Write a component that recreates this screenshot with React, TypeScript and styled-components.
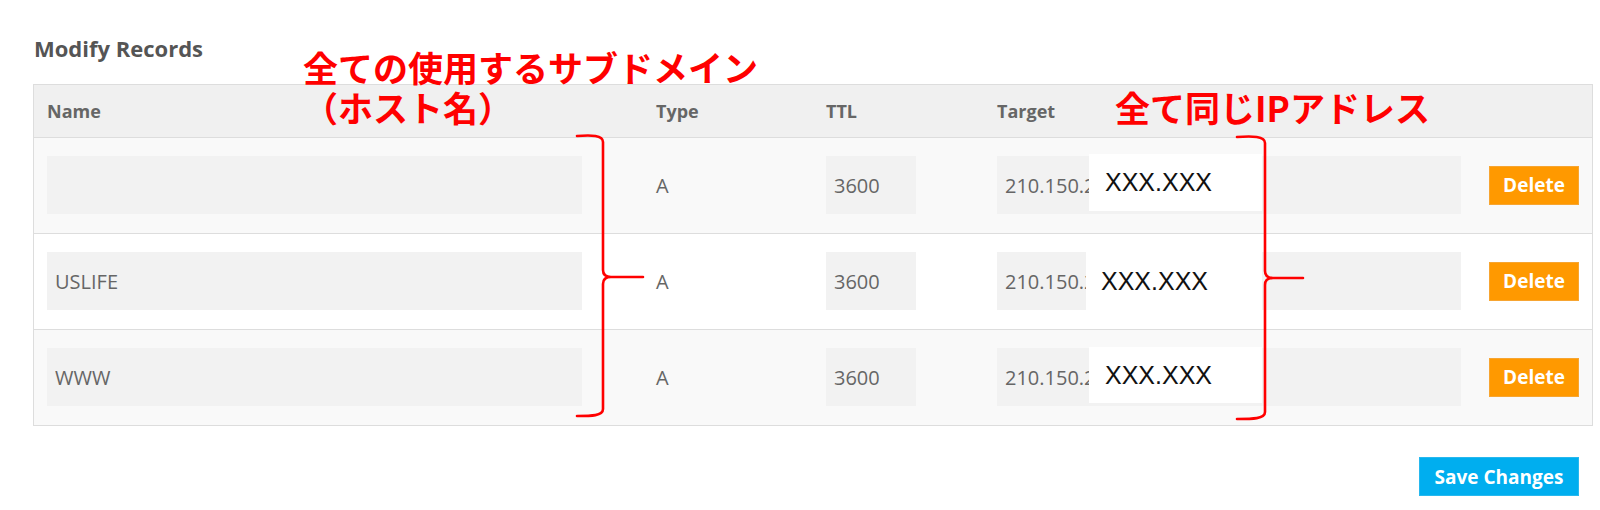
import React from "react";
import styled, { createGlobalStyle } from "styled-components";

const GlobalStyle = createGlobalStyle`
  html, body { margin: 0; padding: 0; background: #ffffff; }
  body { font-family: "Open Sans", "Liberation Sans", sans-serif; }
  * { box-sizing: border-box; }
`;

const Page = styled.div`
  position: relative;
  width: 1600px;
  height: 510px;
  padding: 33px 7px 0 33px;
  overflow: hidden;
`;

const Heading = styled.h2`
  margin: 0 0 21px 1px;
  font-size: 22px;
  line-height: 30px;
  font-weight: 700;
  color: #555555;
`;

const Table = styled.div`
  width: 1560px;
  border: 1px solid #dddddd;
`;

const COLS = "609px 170px 171px 492px 116px";

const HeaderRow = styled.div`
  display: grid;
  grid-template-columns: ${COLS};
  height: 53px;
  background: #f0f0f0;
  border-bottom: 1px solid #dddddd;
`;

const HeaderCell = styled.div`
  display: flex;
  align-items: center;
  padding: 0 13px;
  font-size: 18px;
  font-weight: 700;
  color: #666666;
`;

const Row = styled.div<{ $striped: boolean; $last: boolean }>`
  display: grid;
  grid-template-columns: ${COLS};
  padding: 18px 0 19px;
  background: ${(p) => (p.$striped ? "#f9f9f9" : "#ffffff")};
  border-bottom: ${(p) => (p.$last ? "none" : "1px solid #dddddd")};
`;

const Cell = styled.div`
  position: relative;
  display: flex;
  align-items: center;
  padding: 0 13px;
  font-size: 20px;
  color: #666666;
`;

const Field = styled.input<{ $w: number }>`
  width: ${(p) => p.$w}px;
  height: 58px;
  border: none;
  outline: none;
  background: #f2f2f2;
  padding: 0 8px;
  font-family: "Open Sans", "Liberation Sans", sans-serif;
  font-size: 20px;
  color: #666666;
`;

const DeleteButton = styled.button`
  width: 91px;
  height: 39px;
  border: 1px solid #f7a531;
  background: #ff9900;
  color: #ffffff;
  font-family: "Open Sans", "Liberation Sans", sans-serif;
  font-size: 19px;
  font-weight: 700;
  padding: 0;
  cursor: pointer;
`;

const Footer = styled.div`
  display: flex;
  justify-content: flex-end;
  padding: 31px 14px 0 0;
`;

const SaveButton = styled.button`
  width: 160px;
  height: 39px;
  border: 1px solid #27b8ee;
  background: #00aeef;
  color: #ffffff;
  font-family: "Open Sans", "Liberation Sans", sans-serif;
  font-size: 19px;
  font-weight: 700;
  padding: 0;
  cursor: pointer;
`;

/* white patch that hides the end of the IP address */
const Mask = styled.div<{ $left: number; $top: number; $h: number; $w: number; $pad: number }>`
  position: absolute;
  left: ${(p) => p.$left}px;
  top: ${(p) => p.$top - 18}px;
  width: ${(p) => p.$w}px;
  height: ${(p) => p.$h}px;
  background: #ffffff;
  display: flex;
  align-items: center;
  padding-left: ${(p) => p.$pad}px;
  font-family: "Liberation Sans", Arial, sans-serif;
  font-size: 25px;
  color: #111111;
`;

const Note = styled.div<{ $left: number; $top: number }>`
  position: absolute;
  left: ${(p) => p.$left}px;
  top: ${(p) => p.$top}px;
  font-family: "Noto Sans CJK JP", "Noto Sans", sans-serif;
  font-size: 35px;
  line-height: 40px;
  font-weight: 700;
  color: #ff0000;
  white-space: nowrap;
`;

const BraceSvg = styled.svg<{ $left: number; $top: number }>`
  position: absolute;
  left: ${(p) => p.$left}px;
  top: ${(p) => p.$top}px;
  overflow: visible;
`;

type BraceProps = { left: number; top: number; hook: number; height: number; mid: number; reach: number };

function Brace({ left, top, hook, height, mid, reach }: BraceProps) {
  const x = hook;
  const d = [
    `M0,0 C${x * 0.55},-1 ${x},-1 ${x},6`,
    `L${x},${mid - 7}`,
    `C${x},${mid - 2} ${x + 3},${mid} ${x + 8},${mid}`,
    `L${reach},${mid}`,
    `M${x + 8},${mid} C${x + 3},${mid} ${x},${mid + 2} ${x},${mid + 7}`,
    `L${x},${height - 6}`,
    `C${x},${height + 1} ${x * 0.55},${height + 1} 0,${height + 1}`,
  ].join(" ");
  return (
    <BraceSvg $left={left} $top={top} width={reach} height={height + 2} viewBox={`0 0 ${reach} ${height + 2}`}>
      <path d={d} fill="none" stroke="#ff0000" strokeWidth={2.6} strokeLinecap="round" strokeLinejoin="round" />
    </BraceSvg>
  );
}

type Rec = { name: string; ip: string; mask: { left: number; top: number; h: number; w: number; pad: number } };

const records: Rec[] = [
  { name: "", ip: "210.150.237.112", mask: { left: 105, top: 16, h: 57, w: 173, pad: 16 } },
  { name: "USLIFE", ip: "210.150.237.112", mask: { left: 102, top: 18, h: 58, w: 176, pad: 15 } },
  { name: "WWW", ip: "210.150.237.112", mask: { left: 105, top: 17, h: 56, w: 173, pad: 16 } },
];

export default function App() {
  return (
    <>
      <GlobalStyle />
      <Page>
        <Heading>Modify Records</Heading>
        <Table>
          <HeaderRow>
            <HeaderCell>Name</HeaderCell>
            <HeaderCell>Type</HeaderCell>
            <HeaderCell>TTL</HeaderCell>
            <HeaderCell>Target</HeaderCell>
            <HeaderCell />
          </HeaderRow>
          {records.map((r, i) => (
            <Row key={i} $striped={i % 2 === 0} $last={i === records.length - 1}>
              <Cell>
                <Field $w={535} defaultValue={r.name} />
              </Cell>
              <Cell>A</Cell>
              <Cell>
                <Field $w={90} defaultValue="3600" />
              </Cell>
              <Cell>
                <Field $w={464} defaultValue={r.ip} />
                <Mask $left={r.mask.left} $top={r.mask.top} $h={r.mask.h} $w={r.mask.w} $pad={r.mask.pad}>
                  XXX.XXX
                </Mask>
              </Cell>
              <Cell>
                <DeleteButton>Delete</DeleteButton>
              </Cell>
            </Row>
          ))}
        </Table>
        <Footer>
          <SaveButton>Save Changes</SaveButton>
        </Footer>

        <Note $left={303} $top={47}>
          全ての使用するサブドメイン
          <br />
          （ホスト名）
        </Note>
        <Note $left={1115} $top={87}>全て同じIPアドレス</Note>

        <Brace left={577} top={136} hook={26} height={279} mid={141} reach={66} />
        <Brace left={1237} top={137} hook={28} height={281} mid={141} reach={66} />
      </Page>
    </>
  );
}
